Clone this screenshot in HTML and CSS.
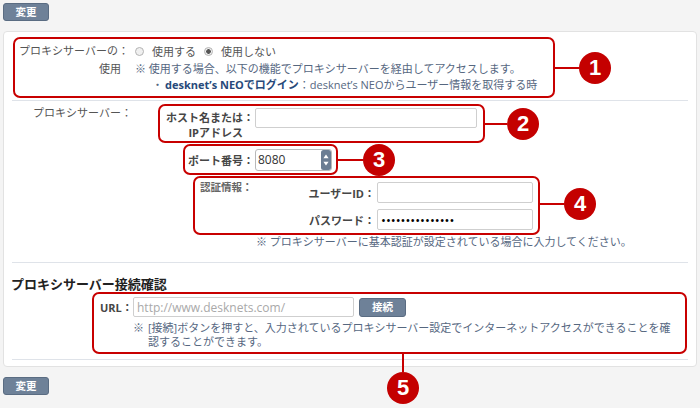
FILE: index.html
```html
<!DOCTYPE html>
<html lang="ja">
<head>
<meta charset="utf-8">
<title>プロキシサーバー設定</title>
<link rel="stylesheet" href="styles.css">
</head>
<body>
<div class="bar"><button class="btn" type="button">変更</button></div>
<div class="panel">
  <div class="box box1">
    <div class="l1">プロキシサーバーの：</div>
    <div class="v1">
      <label class="opt"><input type="radio" name="use" class="radio">使用する</label>
      <label class="opt"><input type="radio" name="use" class="radio" checked>使用しない</label>
    </div>
    <div class="l2">使用</div>
    <div class="v2 note">※ 使用する場合、以下の機能でプロキシサーバーを経由してアクセスします。</div>
    <div class="v3 note">・<b class="hl">desknet’s NEOでログイン</b>：desknet’s NEOからユーザー情報を取得する時</div>
    <span class="callout"><i class="wire w1"></i><b class="num">1</b></span>
  </div>
  <div class="sep sep-a"></div>
  <div class="sec2">
    <div class="sec2-lbl">プロキシサーバー：</div>
    <div class="sec2-body">
      <div class="box box2">
        <div class="flabel host-lbl"><span class="ft">ホスト名または<br>IPアドレス</span><span class="colon">：</span></div>
        <input class="inp inp-host" type="text">
        <span class="callout"><i class="wire w2"></i><b class="num">2</b></span>
      </div>
      <div class="box box3">
        <span class="flabel port-lbl">ポート番号：</span>
        <span class="port">
          <input class="inp inp-port" type="text" value="8080">
          <svg class="spin" width="10" height="20" viewBox="0 0 10 20"><rect width="10" height="20" rx="2.5" fill="#6b7d93"/><path d="M5 4.5 L7.6 8.2 H2.4Z M5 15.5 L7.6 11.8 H2.4Z" fill="#fff"/></svg>
        </span>
        <span class="callout"><i class="wire w3"></i><b class="num">3</b></span>
      </div>
      <div class="box box4">
        <div class="auth-title">認証情報：</div>
        <div class="auth-rows">
          <div class="arow"><span class="flabel">ユーザーID：</span><input class="inp inp-auth" type="text"></div>
          <div class="arow"><span class="flabel">パスワード：</span><input class="inp inp-auth inp-pw" type="password" value="passwordpasswor"></div>
        </div>
        <span class="callout callout4"><i class="wire w4"></i><b class="num">4</b></span>
      </div>
      <p class="note note-auth">※ プロキシサーバーに基本認証が設定されている場合に入力してください。</p>
    </div>
  </div>
  <div class="sep sep-b"></div>
  <h2 class="heading">プロキシサーバー接続確認</h2>
  <div class="box box5">
    <div class="urlrow">
      <span class="flabel url-lbl">URL：</span>
      <input class="inp inp-url" type="text" placeholder="http://www.desknets.com/">
      <button class="btn btn-conn" type="button">接続</button>
    </div>
    <div class="note note-conn"><span class="mark">※</span><span class="ntext">[接続]ボタンを押すと、入力されているプロキシサーバー設定でインターネットアクセスができることを確認することができます。</span></div>
    <span class="callout callout-down"><i class="wire-v"></i><b class="num">5</b></span>
  </div>
  <div class="sep sep-c"></div>
</div>
<div class="bar bar-bottom"><button class="btn" type="button">変更</button></div>
</body>
</html>
```

FILE: styles.css
```css
* { box-sizing: border-box; }
body {
  margin: 0;
  background: #f4f4f4;
  font-family: "Open Sans", "Noto Sans CJK JP", sans-serif;
  font-size: 11px;
  color: #555;
  width: 700px;
  height: 408px;
  overflow: hidden;
}
.bar { padding: 3px 0 0 3px; height: 31px; }
.bar-bottom { padding-top: 10px; height: auto; }
.btn {
  display: block;
  width: 46px;
  height: 18px;
  padding: 0;
  border: 1px solid #5a6c82;
  border-radius: 3px;
  background: #6e8198;
  color: #fff;
  font-family: "Open Sans", "Noto Sans CJK JP", sans-serif;
  font-size: 10.5px;
  font-weight: bold;
  line-height: 16px;
}
.panel {
  margin: 0 3px;
  background: #fff;
  border: 1px solid #e2e2e2;
  border-radius: 4px;
  padding: 5px 0 6px;
}
.box {
  position: relative;
  border: 2px solid #c80000;
  border-radius: 7px;
}
.sep { height: 1px; background: #dfe3e9; margin: 0 8px; }
.sep-a { margin-top: 2px; }
.sep-b { margin-top: 13px; }
.sep-c { margin-top: 5px; }

.note { color: #56677f; }

/* box 1 */
.box1 {
  margin-left: 9px;
  width: 542px;
  height: 61px;
  display: grid;
  grid-template-columns: 114px 1fr;
  grid-template-rows: 20px 16px 16px;
  column-gap: 4px;
  padding-top: 2px;
  white-space: nowrap;
}
.l1 { text-align: right; line-height: 20px; }
.l2 { text-align: right; line-height: 16px; padding-right: 8px; }
.v1 { display: flex; align-items: center; }
.v2 { line-height: 16px; padding-left: 2px; }
.v3 { grid-column: 2; line-height: 16px; padding-left: 19px; }
.hl { color: #27497a; font-weight: bold; padding-left: 2px; }
.opt { display: flex; align-items: center; margin-right: 6px; }
.radio {
  -webkit-appearance: none;
  appearance: none;
  width: 9px;
  height: 9px;
  border: 1px solid #b3b3b3;
  border-radius: 50%;
  background: #f0f0f0;
  margin: 0 8px 0 2px;
}
.radio:checked { background: radial-gradient(circle, #555 0 2px, #f0f0f0 2.6px); }

/* callouts */
.callout {
  position: absolute;
  left: 100%;
  top: 50%;
  transform: translateY(-50%);
  display: flex;
  align-items: center;
  z-index: 2;
}
.callout4 { top: calc(50% - 2px); }
.wire { display: block; height: 2px; background: #c80000; }
.w1 { width: 26px; }
.w2 { width: 24px; }
.w3 { width: 27px; }
.w4 { width: 26px; }
.num {
  width: 32px;
  height: 32px;
  border-radius: 50%;
  background: #c40000;
  color: #fff;
  font-family: "Liberation Sans", sans-serif;
  font-size: 22px;
  font-weight: bold;
  display: flex;
  align-items: center;
  justify-content: center;
}
.callout-down {
  left: 293px;
  top: 100%;
  transform: none;
  flex-direction: column;
}
.wire-v { display: block; width: 2px; height: 20px; background: #c80000; }

/* section 2 */
.sec2 { display: flex; padding-top: 3px; }
.sec2-lbl {
  flex: 0 0 154px;
  padding-left: 29px;
  line-height: 18px;
  white-space: nowrap;
}
.sec2-body { display: flex; flex-direction: column; align-items: flex-start; }
.flabel { font-weight: bold; color: #464646; white-space: nowrap; }
.inp {
  margin: 0;
  border: 1px solid #cfcfcf;
  border-radius: 2px;
  background: #fff;
  padding: 0 3px;
  font-family: "Open Sans", "Noto Sans CJK JP", sans-serif;
  font-size: 12px;
  color: #333;
  outline: none;
}
.box2 {
  width: 327px;
  height: 39px;
  display: flex;
  align-items: flex-start;
  padding-left: 5px;
}
.host-lbl {
  display: flex;
  justify-content: flex-end;
  width: 89px;
  margin-top: 4px;
  line-height: 15px;
}
.ft { text-align: right; }
.inp-host { width: 222px; height: 20px; margin: 2px 0 0 1px; }

.box3 {
  margin: 1px 0 0 25px;
  width: 155px;
  height: 31px;
  display: flex;
  align-items: center;
  padding-left: 3px;
}
.port { position: relative; display: block; width: 77px; height: 22px; margin-left: 1px; }
.inp-port { width: 77px; height: 22px; padding-left: 2px; border-radius: 3px; border-color: #b9b9b9; }
.spin { position: absolute; right: 1px; top: 1px; }

.box4 {
  margin: 1px 0 0 35px;
  width: 347px;
  height: 59px;
  display: flex;
  align-items: flex-start;
  padding: 0 5px;
}
.auth-title {
  margin-top: 2px;
  line-height: 14px;
  font-size: 10.5px;
  font-weight: bold;
  color: #666;
  white-space: nowrap;
}
.auth-rows {
  flex: 1;
  padding-top: 4px;
  display: flex;
  flex-direction: column;
  gap: 6px;
}
.arow { display: flex; justify-content: flex-end; align-items: center; }
.inp-auth { width: 156px; height: 21px; margin-left: 2px; }
.inp-pw { font-size: 13px; letter-spacing: 0; color: #000; }

.note-auth { margin: 0 0 0 98px; line-height: 14px; white-space: nowrap; }

/* section 3 */
.heading {
  margin: 13px 0 0 7px;
  font-size: 13px;
  line-height: 16px;
  font-weight: bold;
  color: #222;
}
.box5 {
  margin-left: 88px;
  width: 595px;
  height: 62px;
}
.urlrow { display: flex; align-items: center; padding: 3px 0 0 6px; }
.url-lbl { width: 33px; }
.inp-url { width: 221px; height: 20px; }
.inp-url::placeholder { color: #a9a9a9; }
.btn-conn { width: 47px; height: 19px; margin-left: 5px; }
.note-conn { display: flex; margin: 4px 0 0 39px; line-height: 14px; }
.mark { flex: 0 0 15px; }
.ntext { width: 530px; }
```
